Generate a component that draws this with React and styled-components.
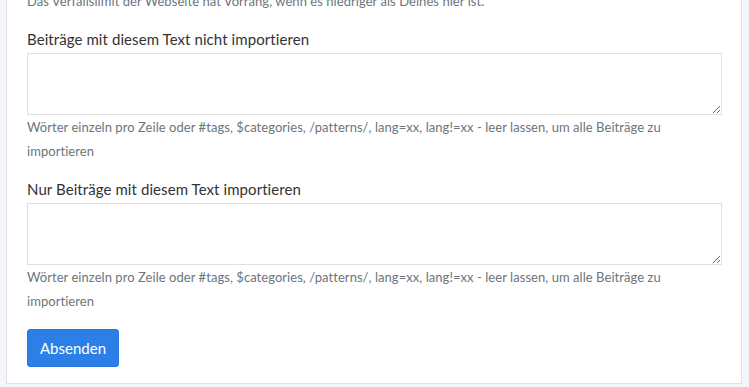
import React from "react";
import styled, { createGlobalStyle } from "styled-components";

const Global = createGlobalStyle`
  html, body { margin: 0; padding: 0; background: #f4f6f9; }
  body { font-family: "Lato", "Noto Sans", sans-serif; overflow: hidden; }
  * { box-sizing: border-box; }
`;

const Page = styled.div`
  padding: 0 7px 0 6px;
  height: 387px;
  overflow: hidden;
`;

const Panel = styled.div`
  margin-top: -11px;
  background: #fff;
  border: 1px solid #dee2e6;
  border-top: none;
  padding: 0 19px 16px 20px;
`;

const Help = styled.div`
  font-size: 13px;
  line-height: 24px;
  letter-spacing: 0.05px;
  color: #6c757d;
`;

const Group = styled.div`
  margin-top: 15px;
  display: flex;
  flex-direction: column;
`;

const Label = styled.label`
  font-size: 15px;
  line-height: 22px;
  letter-spacing: 0.08px;
  color: #333;
  margin-bottom: 3px;
`;

const Area = styled.textarea`
  display: block;
  width: 100%;
  height: 62px;
  border: 1px solid #e0e0e0;
  border-radius: 0;
  resize: vertical;
  font-family: inherit;
  font-size: 14px;
  padding: 6px 10px;
  background: #fff;
`;

const Button = styled.button`
  margin-top: 16px;
  height: 38px;
  padding: 0 12px;
  background: #2b7fe6;
  color: #fff;
  border: 1px solid #2678df;
  border-radius: 3px;
  font-family: inherit;
  font-size: 15px;
  cursor: pointer;
`;

const HELP =
  "Wörter einzeln pro Zeile oder #tags, $categories, /patterns/, lang=xx, lang!=xx - leer lassen, um alle Beiträge zu importieren";

export default function App() {
  return (
    <Page>
      <Global />
      <Panel>
        <Help>Das Verfallslimit der Webseite hat Vorrang, wenn es niedriger als Deines hier ist.</Help>
        <Group>
          <Label>Beiträge mit diesem Text nicht importieren</Label>
          <Area />
          <Help>{HELP}</Help>
        </Group>
        <Group>
          <Label>Nur Beiträge mit diesem Text importieren</Label>
          <Area />
          <Help>{HELP}</Help>
        </Group>
        <Button>Absenden</Button>
      </Panel>
    </Page>
  );
}
